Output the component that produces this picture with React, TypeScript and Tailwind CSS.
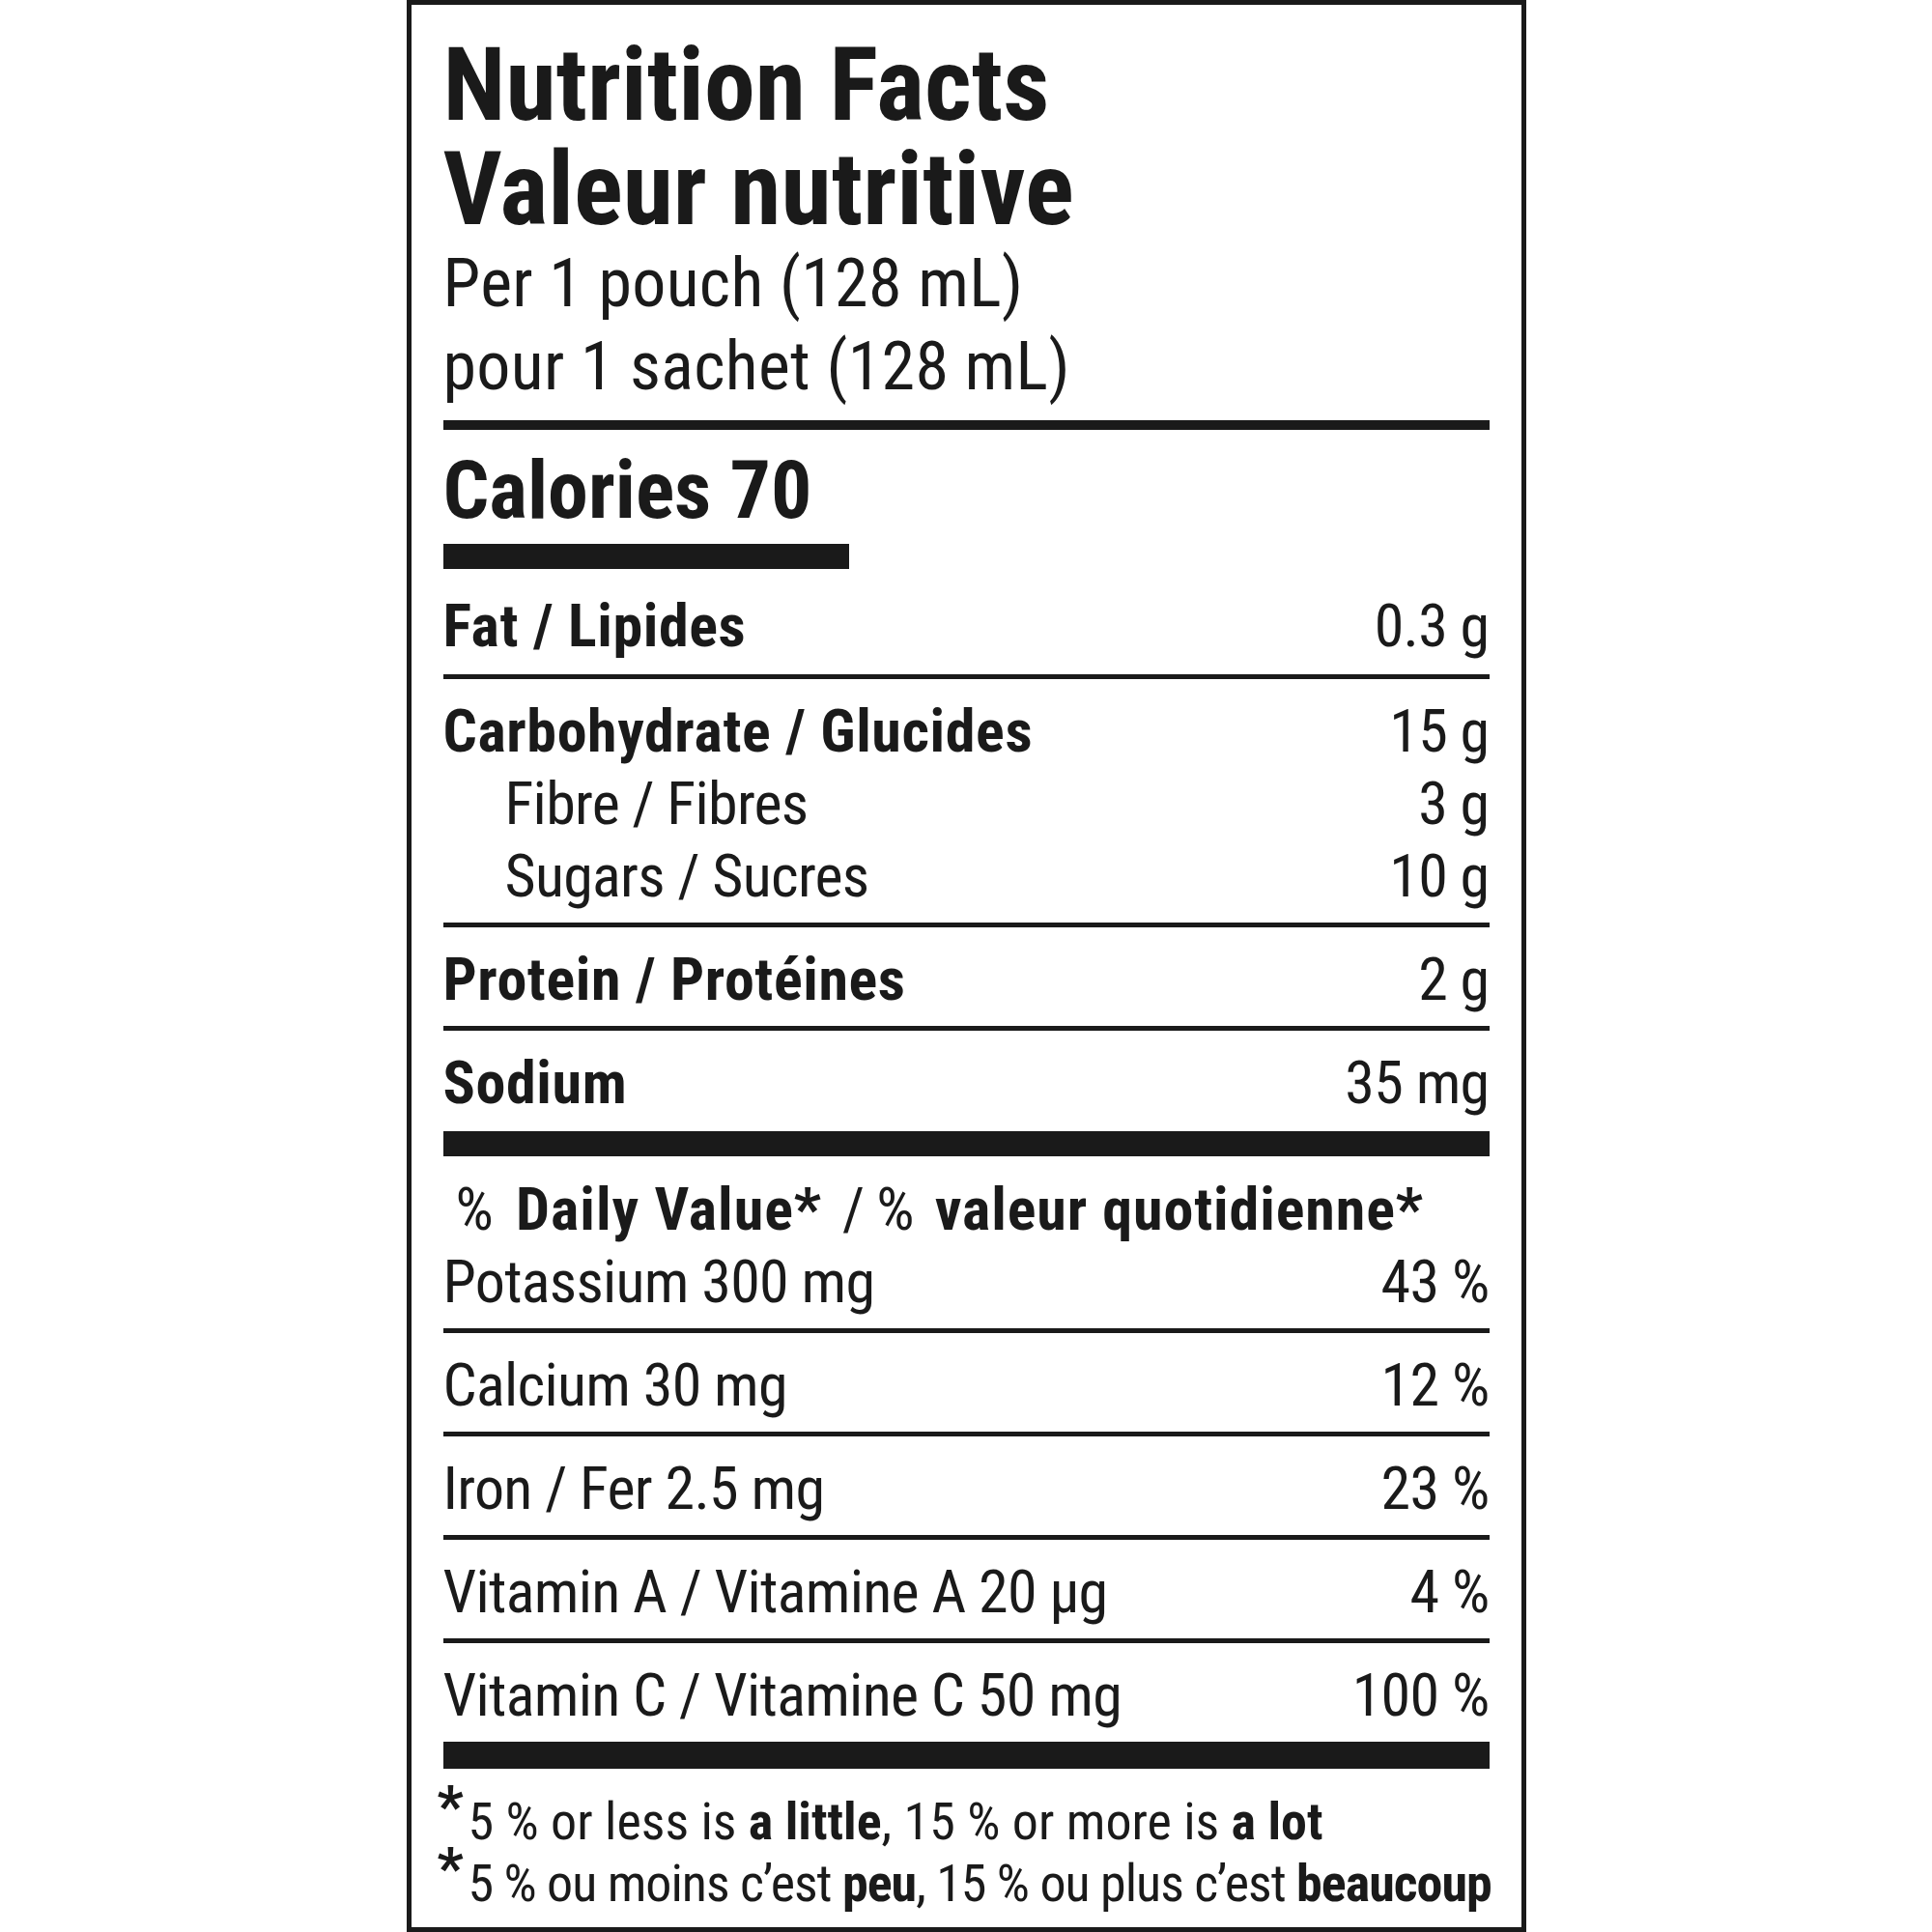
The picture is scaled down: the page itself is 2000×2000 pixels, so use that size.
type RowProps = {
  label: React.ReactNode;
  value: string;
  bold?: boolean;
  indent?: boolean;
};

function Row({ label, value, bold, indent }: RowProps) {
  return (
    <div className="flex justify-between text-[62px] leading-[75px] whitespace-nowrap">
      <span
        className={`${bold ? "font-bold tracking-[0.6px]" : "font-normal tracking-[-0.7px]"} ${
          indent ? "pl-[64px]" : ""
        }`}
      >
        {label}
      </span>
      <span className="tracking-[-0.7px]">{value}</span>
    </div>
  );
}

function Rule() {
  return <div className="w-full h-[5px] bg-[#1a1a1a]" />;
}

function Bar() {
  return <div className="w-full h-[26px] bg-[#1a1a1a]" />;
}

export default function App() {
  return (
    <div className="min-h-screen bg-white flex justify-center font-['Roboto_Condensed',sans-serif] text-[#1a1a1a]">
      <div className="w-[1159px] h-[2000px] shrink-0 border-[5px] border-[#1a1a1a] px-[33px] pt-[29px]">
        <h1 className="text-[106px] leading-[108px] font-bold">
          Nutrition Facts
          <br />
          Valeur nutritive
        </h1>
        <p className="text-[70px] leading-[86px] tracking-[0.3px]">
          Per 1 pouch (128 mL)
          <br />
          pour 1 sachet (128 mL)
        </p>
        <div className="mt-[13px] w-full h-[10px] bg-[#1a1a1a]" />
        <div className="mt-[13px] text-[84px] leading-[100px] font-bold">Calories 70</div>
        <div className="mt-[5px] w-[420px] h-[26px] bg-[#1a1a1a]" />

        <div className="pt-[21px] pb-[13px]">
          <Row label="Fat / Lipides" value="0.3 g" bold />
        </div>
        <Rule />
        <div className="pt-[16px] pb-[11px]">
          <Row label="Carbohydrate / Glucides" value="15 g" bold />
          <Row label="Fibre / Fibres" value="3 g" indent />
          <Row label="Sugars / Sucres" value="10 g" indent />
        </div>
        <Rule />
        <div className="pt-[16px] pb-[11px]">
          <Row label="Protein / Protéines" value="2 g" bold />
        </div>
        <Rule />
        <div className="pt-[16px] pb-[13px]">
          <Row label="Sodium" value="35 mg" bold />
        </div>
        <Bar />

        <div className="pt-[17px] pb-[11px]">
          <div className="text-[62px] leading-[75px] pl-[13px] whitespace-nowrap tracking-[-0.7px]">
            %<span className="ml-[24px] font-bold tracking-[1px]">Daily Value*</span>
            <span className="ml-[21px]">/</span>
            <span className="ml-[13px]">%</span>
            <span className="ml-[22px] font-bold tracking-[0.9px]">valeur quotidienne*</span>
          </div>
          <Row label="Potassium 300 mg" value="43 %" />
        </div>
        <Rule />
        <div className="pt-[16px] pb-[11px]">
          <Row label="Calcium 30 mg" value="12 %" />
        </div>
        <Rule />
        <div className="pt-[16px] pb-[11px]">
          <Row label="Iron / Fer 2.5 mg" value="23 %" />
        </div>
        <Rule />
        <div className="pt-[16px] pb-[11px]">
          <Row label="Vitamin A / Vitamine A 20 µg" value="4 %" />
        </div>
        <Rule />
        <div className="pt-[16px] pb-[11px]">
          <Row label="Vitamin C / Vitamine C 50 mg" value="100 %" />
        </div>
        <div className="w-full h-[28px] bg-[#1a1a1a]" />

        <div className="pt-[23px] text-[54px] leading-[64px] -ml-[6px] whitespace-nowrap">
          <div className="flex items-start">
            <span className="shrink-0 w-[32px] text-[60px] font-bold -translate-y-[16px]">*</span>
            <span>
              5 % or less is <span className="font-bold">a little</span>, 15 % or more is{" "}
              <span className="font-bold">a lot</span>
            </span>
          </div>
          <div className="flex items-start">
            <span className="shrink-0 w-[32px] text-[60px] font-bold -translate-y-[16px]">*</span>
            <span className="tracking-[-1px]">
              5 % ou moins c’est <span className="font-bold">peu</span>, 15 % ou plus c’est{" "}
              <span className="font-bold">beaucoup</span>
            </span>
          </div>
        </div>
      </div>
    </div>
  );
}
